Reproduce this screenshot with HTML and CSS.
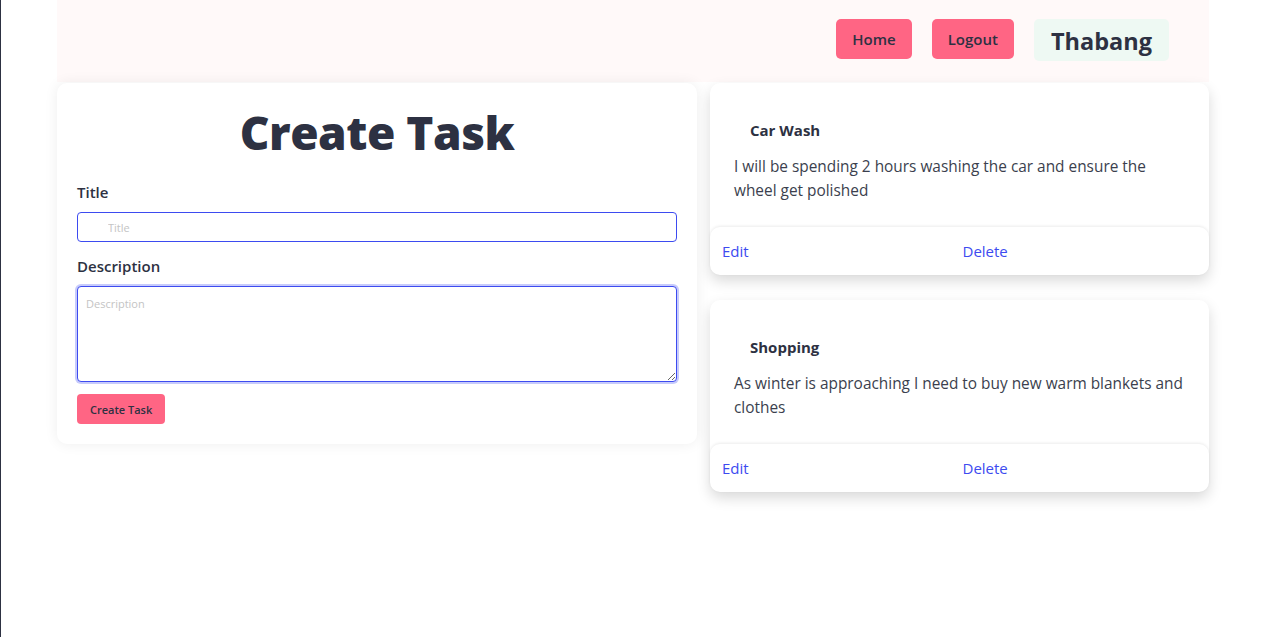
FILE: index.html
```html
<!DOCTYPE html>
<html>
<head>
<meta charset="utf-8">
<link rel="stylesheet" href="styles.css">
</head>
<body>
<div class="page">
  <header class="topbar">
    <button class="nav-btn">Home</button>
    <button class="nav-btn">Logout</button>
    <div class="user">Thabang</div>
  </header>
  <main class="grid">
    <section class="form-card">
      <h1 class="form-title">Create Task</h1>
      <label class="label">Title</label>
      <input class="input" placeholder="Title">
      <label class="label">Description</label>
      <textarea class="textarea" placeholder="Description"></textarea>
      <button class="submit">Create Task</button>
    </section>
    <section class="tasks">
      <article class="task">
        <div class="task-body">
          <h3 class="task-title">Car Wash</h3>
          <p class="task-desc">I will be spending 2 hours washing the car and ensure the wheel get polished</p>
        </div>
        <div class="task-foot">
          <a class="link">Edit</a>
          <a class="link">Delete</a>
        </div>
      </article>
      <article class="task">
        <div class="task-body">
          <h3 class="task-title">Shopping</h3>
          <p class="task-desc">As winter is approaching I need to buy new warm blankets and clothes</p>
        </div>
        <div class="task-foot">
          <a class="link">Edit</a>
          <a class="link">Delete</a>
        </div>
      </article>
    </section>
  </main>
</div>
</body>
</html>
```
FILE: styles.css
```css
html {
  min-height: 100%;
  box-sizing: border-box;
  border-left: 1px solid #2d3142;
  background: #fff;
}
body {
  margin: 0;
  font-family: "Open Sans", "Noto Sans", sans-serif;
  color: #2d3142;
}
.page {
  width: 1152px;
  margin-left: 56px;
  padding-bottom: 40px;
}
.topbar {
  height: 82px;
  background: #fff9f9;
  display: flex;
  justify-content: flex-end;
  align-items: flex-start;
  padding: 19px 40px 0 0;
  box-sizing: border-box;
  gap: 20px;
}
.nav-btn {
  height: 40px;
  padding: 0 16px;
  border: none;
  border-radius: 5px;
  background: #ff6584;
  color: #2d3142;
  font-family: inherit;
  font-size: 15px;
  font-weight: 600;
}
.user {
  height: 42px;
  padding: 0 17px;
  background: #eef9f3;
  border-radius: 5px;
  font-size: 23.5px;
  font-weight: 700;
  line-height: 44px;
}
.grid {
  display: flex;
  gap: 13px;
  align-items: flex-start;
  margin-top: 1px;
}
.form-card {
  width: 640px;
  box-sizing: border-box;
  background: #fff;
  border-radius: 10px;
  box-shadow: 0 0 14px rgba(0,0,0,0.07);
  padding: 14px 20px 20px;
  display: flex;
  flex-direction: column;
}
.form-title {
  margin: 0 0 14px;
  text-align: center;
  font-size: 46px;
  font-weight: 800;
  line-height: 70px;
  letter-spacing: -0.5px;
}
.label {
  font-size: 15px;
  font-weight: 600;
  line-height: 22px;
  margin-bottom: 9px;
}
.input {
  height: 30px;
  box-sizing: border-box;
  border: 1px solid #3d4bf0;
  border-radius: 4px;
  padding: 0 30px;
  font-family: inherit;
  font-size: 11px;
  margin-bottom: 13px;
  outline: none;
}
.input::placeholder, .textarea::placeholder { color: #c4c4c4; }
.textarea {
  height: 96px;
  box-sizing: border-box;
  border: 1px solid #3d4bf0;
  border-radius: 4px;
  box-shadow: 0 0 0 2px #c7cbfb;
  padding: 9px 8px;
  font-family: inherit;
  font-size: 11px;
  margin-bottom: 12px;
  outline: none;
  resize: vertical;
}
.submit {
  align-self: flex-start;
  height: 30px;
  padding: 0 13px;
  border: none;
  border-radius: 4px;
  background: #ff6584;
  color: #2d3142;
  font-family: inherit;
  font-size: 11px;
  font-weight: 600;
}
.tasks {
  width: 499px;
  display: flex;
  flex-direction: column;
  gap: 25px;
}
.task {
  background: #fff;
  border-radius: 10px;
  box-shadow: 0 6px 14px rgba(0,0,0,0.15);
}
.task-body {
  padding: 36px 24px 24px;
}
.task-title {
  margin: 0 0 14px 16px;
  font-size: 15px;
  font-weight: 700;
  line-height: 22px;
}
.task-desc {
  margin: 0;
  font-size: 15.4px;
  line-height: 24px;
  color: #3b3f4e;
}
.task-foot {
  display: grid;
  grid-template-columns: 1fr 1fr;
  padding: 12px;
  border-radius: 10px;
  box-shadow: 0 -1px 3px rgba(0,0,0,0.08);
}
.link {
  color: #3d4bf0;
  font-size: 15px;
  line-height: 24px;
}
.link + .link { padding-left: 3px; }
```
